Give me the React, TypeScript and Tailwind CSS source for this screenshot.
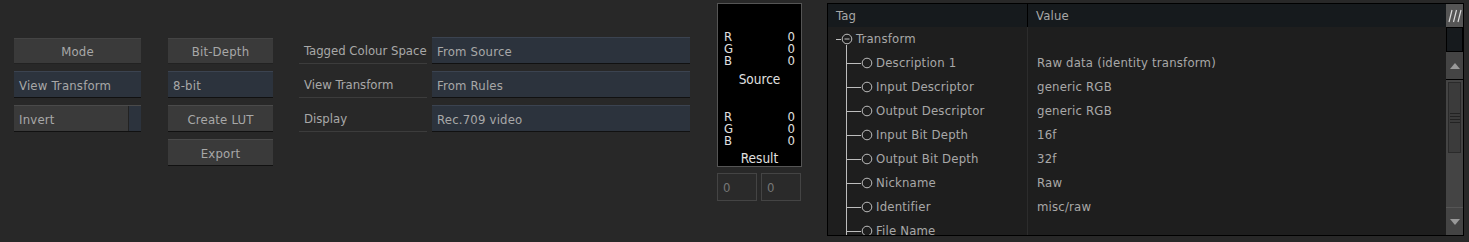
import React from "react";

const font = { fontFamily: '"DejaVu Sans Condensed", "DejaVu Sans", sans-serif' };

function GrayBtn({ label, w }: { label: string; w: string }) {
  return (
    <div className={`${w} h-[26px] bg-[#3a3a3a] border-t border-t-[#444] border-b border-b-[#222] flex items-center justify-center pt-[2px] text-[13px] tracking-[0.2px] text-[#a8a8a8]`}>
      {label}
    </div>
  );
}

function BlueField({ label, w }: { label: string; w: string }) {
  return (
    <div className={`${w} h-[27px] bg-[#2c333d] border-t border-t-[#3b4350] border-b border-b-[#111] flex items-center px-[5px] pt-[2px] text-[13px] tracking-[0.2px] text-[#a8a8a8]`}>
      {label}
    </div>
  );
}

const rows: [string, string][] = [
  ["Description 1", "Raw data (identity transform)"],
  ["Input Descriptor", "generic RGB"],
  ["Output Descriptor", "generic RGB"],
  ["Input Bit Depth", "16f"],
  ["Output Bit Depth", "32f"],
  ["Nickname", "Raw"],
  ["Identifier", "misc/raw"],
  ["File Name", ""],
];

function Circle({ minus }: { minus?: boolean }) {
  return (
    <svg width="12" height="12" viewBox="0 0 12 12" className="shrink-0">
      <circle cx="6" cy="6" r="4.8" fill="none" stroke="#bdbdbd" strokeWidth="1" />
      {minus && <line x1="3.5" y1="6" x2="8.5" y2="6" stroke="#bdbdbd" strokeWidth="1" />}
    </svg>
  );
}

function Rgb() {
  return (
    <div className="flex justify-between text-[13px] leading-[12px]">
      <div className="flex flex-col">
        <span className="h-[12px]">R</span>
        <span className="h-[12px]">G</span>
        <span className="h-[12px]">B</span>
      </div>
      <div className="flex flex-col items-end">
        <span className="h-[12px]">0</span>
        <span className="h-[12px]">0</span>
        <span className="h-[12px]">0</span>
      </div>
    </div>
  );
}

export default function App() {
  return (
    <div className="w-[1469px] h-[242px] bg-[#282828] overflow-hidden flex items-start" style={font}>
      {/* column 1 */}
      <div className="ml-[14px] mt-[38px] w-[127px] flex flex-col gap-[7px]">
        <GrayBtn label="Mode" w="w-[127px]" />
        <BlueField label="View Transform" w="w-[127px]" />
        <div className="w-[127px] h-[27px] flex border-t border-t-[#4a4a4a] border-b border-b-[#111]">
          <div className="flex-1 bg-[#3a3a3a] flex items-center px-[5px] pt-[2px] text-[13px] tracking-[0.2px] text-[#a8a8a8]">Invert</div>
          <div className="w-px bg-[#222]" />
          <div className="w-[12px] bg-[#2c333d]" />
        </div>
      </div>
      {/* column 2 */}
      <div className="ml-[27px] mt-[38px] w-[105px] flex flex-col gap-[7px]">
        <GrayBtn label="Bit-Depth" w="w-[105px]" />
        <BlueField label="8-bit" w="w-[105px]" />
        <div className="w-[105px] h-[27px] bg-[#3a3a3a] border-t border-t-[#4a4a4a] border-b border-b-[#111] flex items-center justify-center pt-[2px] text-[13px] tracking-[0.2px] text-[#a8a8a8]">Create LUT</div>
        <div className="w-[105px] h-[27px] bg-[#3a3a3a] border-t border-t-[#4a4a4a] border-b border-b-[#111] flex items-center justify-center pt-[2px] text-[13px] tracking-[0.2px] text-[#a8a8a8]">Export</div>
      </div>
      {/* column 3 */}
      <div className="ml-[26px] mt-[37px] flex flex-col gap-[7px]">
        {[
          ["Tagged Colour Space", "From Source"],
          ["View Transform", "From Rules"],
          ["Display", "Rec.709 video"],
        ].map(([l, v]) => (
          <div key={l} className="flex h-[27px]">
            <div className="w-[128px] border-b border-b-[#3c3c3c] flex items-center pl-[5px] pt-[2px] text-[13px] text-[#a8a8a8] whitespace-nowrap">{l}</div>
            <div className="ml-[5px] w-[258px] bg-[#2c333d] border-t border-t-[#3b4350] border-b border-b-[#111] flex items-center px-[5px] pt-[2px] text-[13px] tracking-[0.2px] text-[#a8a8a8]">{v}</div>
          </div>
        ))}
      </div>
      {/* swatch */}
      <div className="ml-[27px] mt-[3px] flex flex-col">
        <div className="w-[85px] h-[164px] bg-black border border-[#555] flex flex-col px-[6px] text-[#e0e0e0]">
          <div className="mt-[27px]"><Rgb /></div>
          <div className="text-center text-[13.5px] leading-[16px] mt-[4px]">Source</div>
          <div className="mt-[24px]"><Rgb /></div>
          <div className="text-center text-[13.5px] leading-[16px] mt-[3px]">Result</div>
        </div>
        <div className="mt-[6px] flex gap-[4px]">
          <div className="w-[40px] h-[28px] bg-[#2a2a2a] border border-[#444] flex items-center px-[5px] pt-[1px] text-[13px] text-[#777]">0</div>
          <div className="w-[40px] h-[28px] bg-[#2a2a2a] border border-[#444] flex items-center px-[5px] pt-[1px] text-[13px] text-[#777]">0</div>
        </div>
      </div>
      {/* table */}
      <div className="ml-[25px] mt-[3px] w-[637px] h-[233px] border border-black flex bg-[#1e1e1e]">
        <div className="flex-1 flex flex-col overflow-hidden">
          <div className="h-[23px] shrink-0 bg-[#161a1d] flex text-[13px] tracking-[0.2px] text-[#a8a8a8]">
            <div className="w-[200px] flex items-center px-[8px] border-r border-r-black">Tag</div>
            <div className="flex-1 flex items-center px-[8px]">Value</div>
          </div>
          <div className="flex-1 flex overflow-hidden relative">
            <div className="w-[200px] border-r border-r-[#2c2c2c] shrink-0 relative">
              <div className="absolute left-[18px] top-[18px] bottom-0 w-px bg-[#bdbdbd]" />
              <div className="h-[24px] flex items-center pl-[8px] text-[13px] tracking-[0.2px] text-[#a8a8a8]">
                <div className="w-[5px] h-px bg-[#bdbdbd]" />
                <Circle minus />
                <span className="ml-[3px]">Transform</span>
              </div>
              {rows.map(([t]) => (
                <div key={t} className="h-[24px] flex items-center pl-[19px] text-[13px] tracking-[0.2px] text-[#a8a8a8] whitespace-nowrap">
                  <div className="w-[14px] h-px bg-[#bdbdbd]" />
                  <Circle />
                  <span className="ml-[3px]">{t}</span>
                </div>
              ))}
            </div>
            <div className="flex-1">
              <div className="h-[24px]" />
              {rows.map(([t, v]) => (
                <div key={t} className="h-[24px] flex items-center px-[9px] text-[13px] tracking-[0.2px] text-[#a8a8a8] whitespace-nowrap">{v}</div>
              ))}
            </div>
          </div>
        </div>
        {/* scrollbar */}
        <div className="w-[17px] shrink-0 flex flex-col bg-[#1e1e1e]">
          <div className="h-[23px] bg-[#555] flex items-center justify-center">
            <svg width="14" height="16" viewBox="0 0 14 16">
              <line x1="1" y1="14" x2="4" y2="2" stroke="#ddd" strokeWidth="1.2" />
              <line x1="5.5" y1="14" x2="8.5" y2="2" stroke="#ddd" strokeWidth="1.2" />
              <line x1="10" y1="14" x2="13" y2="2" stroke="#ddd" strokeWidth="1.2" />
            </svg>
          </div>
          <div className="h-[25px] bg-[#161a1d] border border-black" />
          <div className="h-[28px] bg-[#444] border-b border-b-black flex items-center justify-center">
            <svg width="10" height="6" viewBox="0 0 10 6"><polygon points="0,6 10,6 5,0" fill="#999" /></svg>
          </div>
          <div className="flex-1 bg-[#444] pt-[2px] px-[2px] flex flex-col">
            <div className="h-[71px] bg-[#3b3b3b] border border-[#2a2a2a] flex flex-col items-center justify-center gap-[2px]">
              <div className="w-[10px] h-px bg-[#222]" />
              <div className="w-[10px] h-px bg-[#222]" />
              <div className="w-[10px] h-px bg-[#222]" />
              <div className="w-[10px] h-px bg-[#222]" />
            </div>
          </div>
          <div className="h-[28px] bg-[#444] border-t border-t-[#555] flex items-center justify-center">
            <svg width="10" height="6" viewBox="0 0 10 6"><polygon points="0,0 10,0 5,6" fill="#999" /></svg>
          </div>
        </div>
      </div>
    </div>
  );
}
